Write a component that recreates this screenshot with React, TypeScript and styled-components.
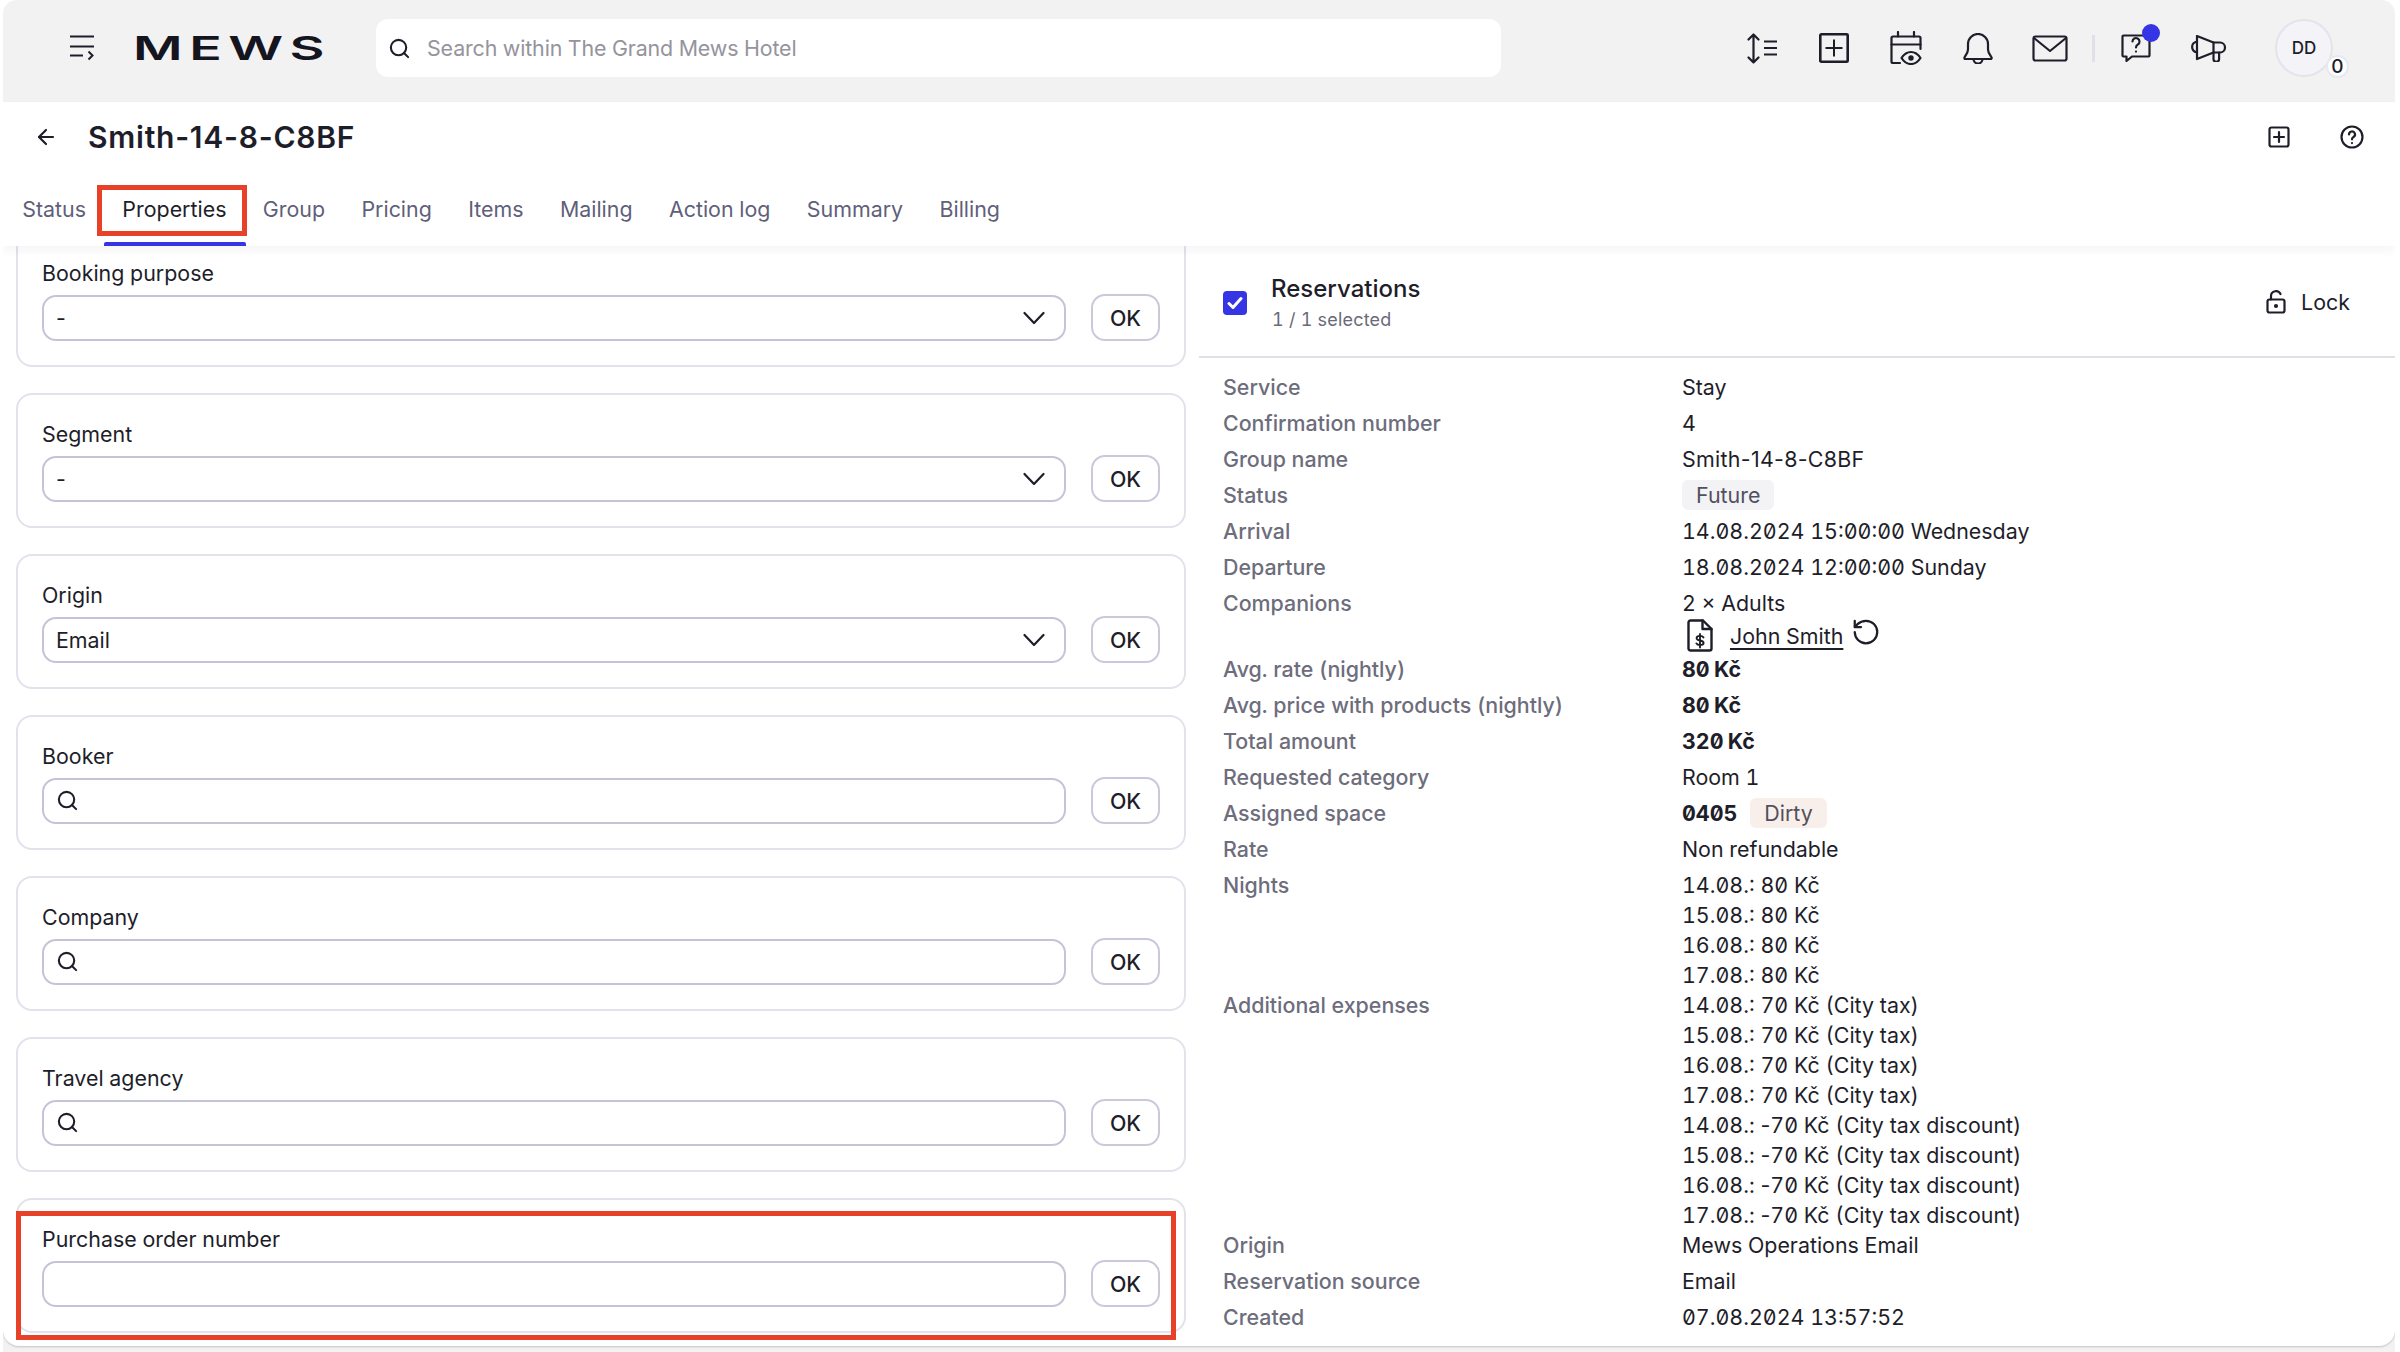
import React from 'react';
import styled, { createGlobalStyle } from 'styled-components';
import { ArrowLeft, RotateCcw, Search } from 'lucide-react';

const ink = '#1e1e2a';
const blue = '#3535e6';

const GlobalStyle = createGlobalStyle`
  html, body {
    margin: 0;
    background: #fff;
    color: ${ink};
    font-family: Inter, "Noto Sans", sans-serif;
    font-size: 21.4px;
    font-feature-settings: "zero", "tnum";
  }
  * { box-sizing: border-box; }
`;

const Page = styled.div`
  position: relative;
  width: 2392px;
  height: 1352px;
  margin-left: 3px;
  display: flex;
  flex-direction: column;
  background: #f2f2f3;
  border-radius: 14px 14px 0 0;
  overflow: hidden;
`;

// Top bar
const TopBar = styled.header`
  flex: none;
  height: 102px;
  display: flex;
  align-items: center;
  padding: 0 62px 6px 67px;
`;

const MenuIcon = styled.svg`
  flex: none;
  width: 24px;
  height: 26px;
  fill: none;
  stroke: ${ink};
  stroke-width: 1.8;
`;

const LogoBox = styled.div`
  flex: none;
  width: 192px;
  margin-left: 39px;
`;

const Logo = styled.span`
  display: inline-block;
  font-size: 33px;
  line-height: 34px;
  font-weight: 600;
  letter-spacing: 4px;
  color: #15151f;
  transform: scaleX(1.63);
  transform-origin: left center;
`;

const SearchBox = styled.div`
  flex: none;
  width: 1125px;
  height: 58px;
  margin-left: 51px;
  display: flex;
  align-items: center;
  gap: 16px;
  padding-left: 12px;
  background: #fff;
  border-radius: 12px;
`;

const Placeholder = styled.span`
  color: #94949c;
  letter-spacing: -0.13px;
`;

const TopIcons = styled.nav`
  margin-left: auto;
  display: flex;
  align-items: center;
`;

const IconCell = styled.div`
  position: relative;
  width: 72px;
  height: 58px;
  display: flex;
  align-items: center;
  justify-content: center;
`;

const Dot = styled.span`
  position: absolute;
  top: 5px;
  left: 42px;
  width: 18px;
  height: 18px;
  border-radius: 50%;
  background: ${blue};
`;

const Separator = styled.div`
  width: 3px;
  height: 27px;
  margin: 0 5px 0 6px;
  background: #e0e0ea;
`;

const Avatar = styled.div`
  position: relative;
  width: 58px;
  height: 58px;
  margin-left: 31px;
  display: flex;
  align-items: center;
  justify-content: center;
  background: #f4f4f8;
  border: 2px solid #e3e3ed;
  border-radius: 50%;
  font-size: 17px;
  font-weight: 500;
`;

const AvatarBadge = styled.span`
  position: absolute;
  right: -18px;
  bottom: -3px;
  width: 23px;
  height: 23px;
  display: flex;
  align-items: center;
  justify-content: center;
  background: #fff;
  border: 2px solid #e8e8f0;
  border-radius: 50%;
  font-size: 19px;
  font-weight: 500;
  font-feature-settings: normal;
`;

const Main = styled.main`
  flex: 1;
  min-height: 0;
  margin-bottom: 6px;
  display: flex;
  flex-direction: column;
  background: #fff;
  border-radius: 0 0 16px 16px;
  box-shadow: 0 1px 2px rgba(30, 30, 42, 0.22);
  overflow: hidden;
`;

// Title and tabs
const PageHead = styled.div`
  position: relative;
  z-index: 1;
  flex: none;
  height: 144px;
  background: #fff;
  box-shadow: 0 4px 10px rgba(30, 30, 42, 0.05);
`;

const TitleRow = styled.div`
  height: 70px;
  display: flex;
  align-items: center;
  padding: 0 31px;
`;

const Title = styled.h1`
  margin: 0 0 0 30px;
  font-size: 30px;
  line-height: 36px;
  font-weight: 600;
  letter-spacing: 0.75px;
  font-feature-settings: "zero";
`;

const TitleActions = styled.div`
  margin-left: auto;
  display: flex;
  align-items: center;
  gap: 50px;
`;

const TabRow = styled.div`
  height: 74px;
  display: flex;
  padding-left: 1px;
`;

const Tab = styled.div<{ $active?: boolean }>`
  position: relative;
  height: 100%;
  display: flex;
  align-items: center;
  padding: 0 18.2px;
  color: ${p => (p.$active ? ink : '#5f5f7a')};

  ${p =>
    p.$active &&
    `&::after {
      content: '';
      position: absolute;
      left: 0;
      right: -1px;
      bottom: 0;
      height: 4px;
      border-radius: 2px 2px 0 0;
      background: ${blue};
    }`}
`;

const Content = styled.div`
  flex: 1;
  min-height: 0;
  display: flex;
`;

// Left column
const FormPane = styled.section`
  flex: none;
  width: 1196px;
  padding: 0 13px;
  overflow: hidden;
`;

const Cards = styled.div`
  margin-top: -14px;
  display: flex;
  flex-direction: column;
  gap: 26px;
`;

const Card = styled.div`
  height: 135px;
  padding: 23px 24px 0;
  border: 2px solid #e2e2ec;
  border-radius: 16px;
`;

const FieldLabel = styled.div`
  height: 32px;
  margin-bottom: 5px;
  line-height: 32px;
`;

const FieldRow = styled.div`
  display: flex;
  align-items: flex-end;
  gap: 25px;
`;

const Field = styled.div`
  flex: 1;
  height: 46px;
  display: flex;
  align-items: center;
  gap: 10px;
  padding: 0 19px 1px 12px;
  border: 2px solid #c5c3d7;
  border-radius: 14px;
  background: #fff;
`;

const FieldValue = styled.span`
  flex: 1;
  font-feature-settings: "zero";
`;

const OkButton = styled.button`
  flex: none;
  width: 69px;
  height: 47px;
  padding: 0;
  background: #fff;
  border: 2px solid #cac9db;
  border-radius: 14px;
  color: ${ink};
  font: 500 21.4px Inter, sans-serif;
`;

// Right column
const DetailPane = styled.section`
  flex: 1;
  min-width: 0;
`;

const PanelHead = styled.div`
  height: 112px;
  display: flex;
  align-items: center;
  padding: 3px 45px 0 24px;
  border-bottom: 2px solid #dfdfe6;
`;

const Checkbox = styled.span`
  flex: none;
  width: 24px;
  height: 24px;
  display: flex;
  align-items: center;
  justify-content: center;
  border-radius: 4px;
  background: ${blue};
`;

const PanelTitleBlock = styled.div`
  margin-left: 24px;
`;

const PanelTitle = styled.div`
  font-size: 24px;
  line-height: 32px;
  font-weight: 500;
`;

const PanelSub = styled.div`
  margin: 1px 0 -1px 1px;
  font-size: 18px;
  line-height: 28px;
  letter-spacing: 0.2px;
  color: #6a6a78;
`;

const LockButton = styled.div`
  margin: 0 0 2px auto;
  display: flex;
  align-items: center;
  gap: 15px;
`;

const Rows = styled.div`
  padding: 8px 0 0 24px;
`;

const Row = styled.div<{ $gap?: number }>`
  display: grid;
  grid-template-columns: 459px 1fr;
  margin-top: ${p => p.$gap ?? 6}px;
`;

const RowLabel = styled.div`
  line-height: 30px;
  font-weight: 500;
  color: #6d6d7c;
`;

const Line = styled.div`
  height: 30px;
  line-height: 30px;
`;

const Strong = styled.span`
  font-weight: 700;
  word-spacing: -1.5px;
`;

const GroupName = styled.span`
  letter-spacing: 0.3px;
  font-feature-settings: "zero";
`;

const Dash = styled.span`
  font-feature-settings: "zero";
`;

const Pill = styled.span<{ $bg: string }>`
  display: inline-block;
  height: 30px;
  padding: 0 14px;
  line-height: 30px;
  border-radius: 6px;
  background: ${p => p.$bg};
  color: #51515e;
`;

const SpaceLine = styled(Line)`
  display: flex;
  gap: 13px;
`;

const GuestLine = styled(Line)`
  display: flex;
  align-items: flex-start;
`;

const GuestIcon = styled.svg`
  flex: none;
  width: 26px;
  height: 33px;
  margin: 1px 0 0 5px;
  fill: none;
  stroke: ${ink};
  stroke-width: 2.4;
  stroke-linecap: round;
  stroke-linejoin: round;
`;

const GuestName = styled.a`
  margin: 3px 8px 0 17px;
  color: ${ink};
  line-height: 30px;
  text-decoration: underline;
  text-underline-offset: 4px;
  text-decoration-thickness: 2px;
`;

const RefreshIcon = styled(RotateCcw)`
  flex: none;
  margin-top: -1px;
`;

const Outline = styled.svg`
  flex: none;
  fill: none;
  stroke: ${ink};
  stroke-width: 2.2;
  stroke-linecap: round;
  stroke-linejoin: round;
`;

// Red annotation frames drawn over the screenshot
const Frame = styled.div<{ $x: number; $y: number; $w: number; $h: number }>`
  position: absolute;
  left: ${p => p.$x}px;
  top: ${p => p.$y}px;
  width: ${p => p.$w}px;
  height: ${p => p.$h}px;
  border: 5px solid #e8412a;
  pointer-events: none;
  z-index: 5;
`;

const discount = (day: string) => (
  <>
    {day}.: <Dash>-</Dash>70 Kč (City tax discount)
  </>
);

const details: { label: string; gap?: number; lines: React.ReactNode[] }[] = [
  { label: 'Service', lines: ['Stay'] },
  { label: 'Confirmation number', lines: ['4'] },
  { label: 'Group name', lines: [<GroupName key="n">Smith-14-8-C8BF</GroupName>] },
  { label: 'Status', lines: [<Pill key="s" $bg="#f3f3f6">Future</Pill>] },
  { label: 'Arrival', lines: ['14.08.2024 15:00:00 Wednesday'] },
  { label: 'Departure', lines: ['18.08.2024 12:00:00 Sunday'] },
  {
    label: 'Companions',
    lines: [
      '2 × Adults',
      <GuestLine key="g">
        <GuestIcon viewBox="0 0 26 33">
          <path d="M3.500 1.500H16l8.500 8.500v19.500a2 2 0 0 1-2 2h-19a2 2 0 0 1-2-2v-26a2 2 0 0 1 2-2z" />
          <path d="M15.500 1.500V10h9" />
          <path d="M16.500 18.500c-.5-1-1.700-1.600-3.500-1.600-2 0-3.400.9-3.400 2.300 0 3 7 1.500 7 4.600 0 1.400-1.500 2.300-3.600 2.300-1.800 0-3.100-.6-3.600-1.700M13 15v13.500" strokeWidth="1.900" />
        </GuestIcon>
        <GuestName>John Smith</GuestName>
        <RefreshIcon size={30} strokeWidth={1.8} color={ink} />
      </GuestLine>,
    ],
  },
  { label: 'Avg. rate (nightly)', lines: [<Strong key="r">80 Kč</Strong>] },
  { label: 'Avg. price with products (nightly)', lines: [<Strong key="p">80 Kč</Strong>] },
  { label: 'Total amount', lines: [<Strong key="t">320 Kč</Strong>] },
  { label: 'Requested category', lines: ['Room 1'] },
  {
    label: 'Assigned space',
    lines: [
      <SpaceLine key="a">
        <Strong>0405</Strong>
        <Pill $bg="#f9efea">Dirty</Pill>
      </SpaceLine>,
    ],
  },
  { label: 'Rate', lines: ['Non refundable'] },
  {
    label: 'Nights',
    lines: ['14.08.: 80 Kč', '15.08.: 80 Kč', '16.08.: 80 Kč', '17.08.: 80 Kč'],
  },
  {
    label: 'Additional expenses',
    gap: 0,
    lines: [
      '14.08.: 70 Kč (City tax)',
      '15.08.: 70 Kč (City tax)',
      '16.08.: 70 Kč (City tax)',
      '17.08.: 70 Kč (City tax)',
      discount('14.08'),
      discount('15.08'),
      discount('16.08'),
      discount('17.08'),
    ],
  },
  { label: 'Origin', gap: 0, lines: ['Mews Operations Email'] },
  { label: 'Reservation source', lines: ['Email'] },
  { label: 'Created', lines: ['07.08.2024 13:57:52'] },
];

const fields: { label: string; kind: 'select' | 'search' | 'text'; value?: string }[] = [
  { label: 'Booking purpose', kind: 'select', value: '-' },
  { label: 'Segment', kind: 'select', value: '-' },
  { label: 'Origin', kind: 'select', value: 'Email' },
  { label: 'Booker', kind: 'search' },
  { label: 'Company', kind: 'search' },
  { label: 'Travel agency', kind: 'search' },
  { label: 'Purchase order number', kind: 'text' },
];

const tabs = ['Status', 'Properties', 'Group', 'Pricing', 'Items', 'Mailing', 'Action log', 'Summary', 'Billing'];

export default function App() {
  return (
    <Page>
      <GlobalStyle />
      <TopBar>
        <MenuIcon viewBox="0 0 24 26">
          <path d="M0 1.500h24M0 11.500h24M0 20.500h13" />
          <path d="M18.500 16.500l4 4-4 4" strokeWidth="2" />
        </MenuIcon>
        <LogoBox>
          <Logo>MEWS</Logo>
        </LogoBox>
        <SearchBox>
          <Search size={23} strokeWidth={2.2} color={ink} />
          <Placeholder>Search within The Grand Mews Hotel</Placeholder>
        </SearchBox>
        <TopIcons>
          <IconCell>
            <Outline width={31} height={31} viewBox="0 0 31 31">
              <path d="M6.500 1.500v28M1.500 6.500l5-5 5 5M1.500 24.500l5 5 5-5" />
              <path d="M17 8.500h13M17 15h13M17 21.500h13" strokeLinecap="butt" />
            </Outline>
          </IconCell>
          <IconCell>
            <Outline width={30} height={30} viewBox="0 0 30 30">
              <rect x="1.300" y="1.300" width="27.400" height="27.400" rx="1" strokeWidth="2.600" />
              <path d="M15 6.500v17M6.500 15h17" strokeWidth="2" strokeLinecap="butt" />
            </Outline>
          </IconCell>
          <IconCell>
            <Outline width={32} height={34} viewBox="0 0 32 34">
              <path d="M10 32H3a1.500 1.500 0 0 1-1.500-1.500V7A1.500 1.500 0 0 1 3 5.500h26A1.500 1.500 0 0 1 30.500 7v11" />
              <path d="M1.500 13.500h29M8 1v4.500M24 1v4.500" />
              <path d="M11.500 27c2.500-3.800 5.800-6 9.500-6s7 2.200 9.500 6c-2.500 3.800-5.800 6-9.500 6s-7-2.200-9.500-6z" />
              <circle cx="21" cy="27" r="1.600" fill={ink} />
            </Outline>
          </IconCell>
          <IconCell>
            <Outline width={30} height={31} viewBox="0 0 30 31">
              <path d="M1.500 24.500C2 23 5 20 5 16.500V11a10 10 0 0 1 20 0v5.500c0 3.500 3 6.500 3.500 8a1 1 0 0 1-1 1.500h-25a1 1 0 0 1-1-1.500z" />
              <path d="M10.500 26a4.500 4.500 0 0 0 9 0" />
            </Outline>
          </IconCell>
          <IconCell>
            <Outline width={36} height={27} viewBox="0 0 36 27">
              <rect x="1.500" y="1.500" width="33" height="24" rx="2" />
              <path d="M2 3l16 13L34 3" />
            </Outline>
          </IconCell>
          <Separator />
          <IconCell>
            <Outline width={30} height={28} viewBox="0 0 30 28">
              <path d="M2.500 1.500h25a1 1 0 0 1 1 1v19a1 1 0 0 1-1 1H11l-5.500 4.500v-4.500h-3a1 1 0 0 1-1-1v-19a1 1 0 0 1 1-1z" />
              <path d="M11.500 7.500a3.500 3.500 0 1 1 5.500 2.900c-1.300.9-2 1.600-2 3.100M15 17.500v.1" />
            </Outline>
            <Dot />
          </IconCell>
          <IconCell>
            <Outline width={37} height={27} viewBox="0 0 37 27">
              <path d="M7 1v23M7 1l16.500 6.500M7 24l16.500-6.500" />
              <path d="M7 6.500c-6.500 1.500-6.500 9.500 0 11" />
              <path d="M23.500 7.500H30a5 5 0 0 1 0 10h-6.500z" />
              <path d="M23.500 17.500v6.500a2.800 2.800 0 0 0 5.600 0v-6.500" />
            </Outline>
          </IconCell>
        </TopIcons>
        <Avatar>
          DD
          <AvatarBadge>0</AvatarBadge>
        </Avatar>
      </TopBar>

      <Main>
        <PageHead>
          <TitleRow>
            <ArrowLeft size={24} strokeWidth={2.2} color={ink} />
            <Title>Smith-14-8-C8BF</Title>
            <TitleActions>
              <Outline width={22} height={22} viewBox="0 0 22 22">
                <rect x="1.500" y="1.500" width="19" height="19" rx="2" />
                <path d="M11 6v10M6 11h10" />
              </Outline>
              <Outline width={24} height={24} viewBox="0 0 24 24">
                <circle cx="12" cy="12" r="10.500" />
                <path d="M9 9.500a3 3 0 1 1 4.500 2.500c-1 .6-1.500 1.200-1.500 2.300M12 18v.1" />
              </Outline>
            </TitleActions>
          </TitleRow>
          <TabRow>
            {tabs.map(t => (
              <Tab key={t} $active={t === 'Properties'}>{t}</Tab>
            ))}
          </TabRow>
        </PageHead>
        <Content>
          <FormPane>
            <Cards>
              {fields.map(f => (
                <Card key={f.label}>
                  <FieldLabel>{f.label}</FieldLabel>
                  <FieldRow>
                    <Field>
                      {f.kind === 'search' && <Search size={23} strokeWidth={2.2} color={ink} />}
                      <FieldValue>{f.value}</FieldValue>
                      {f.kind === 'select' && (
                        <Outline width={22} height={14} viewBox="0 0 22 14">
                          <path d="M1.500 2l9.500 10 9.500-10" />
                        </Outline>
                      )}
                    </Field>
                    <OkButton>OK</OkButton>
                  </FieldRow>
                </Card>
              ))}
            </Cards>
          </FormPane>
          <DetailPane>
            <PanelHead>
              <Checkbox>
                <svg width="16" height="14" viewBox="0 0 16 14" fill="none" stroke="#fff" strokeWidth="3" strokeLinecap="round" strokeLinejoin="round">
                  <path d="M2 7.500l4 4 8-9" />
                </svg>
              </Checkbox>
              <PanelTitleBlock>
                <PanelTitle>Reservations</PanelTitle>
                <PanelSub>1 / 1 selected</PanelSub>
              </PanelTitleBlock>
              <LockButton>
                <Outline width={20} height={24} viewBox="0 0 20 24">
                  <rect x="1.500" y="9.500" width="17" height="13" rx="2" />
                  <path d="M5 9.500V6a5 5 0 0 1 9.500-2" />
                  <circle cx="10" cy="16" r="1" fill={ink} />
                </Outline>
                Lock
              </LockButton>
            </PanelHead>
            <Rows>
              {details.map(d => (
                <Row key={d.label} $gap={d.gap}>
                  <RowLabel>{d.label}</RowLabel>
                  <div>
                    {d.lines.map((l, i) => (
                      <Line key={i}>{l}</Line>
                    ))}
                  </div>
                </Row>
              ))}
            </Rows>
          </DetailPane>
        </Content>
      </Main>

      <Frame $x={94} $y={185} $w={150} $h={51} />
      <Frame $x={13} $y={1211} $w={1160} $h={129} />
    </Page>
  );
}
